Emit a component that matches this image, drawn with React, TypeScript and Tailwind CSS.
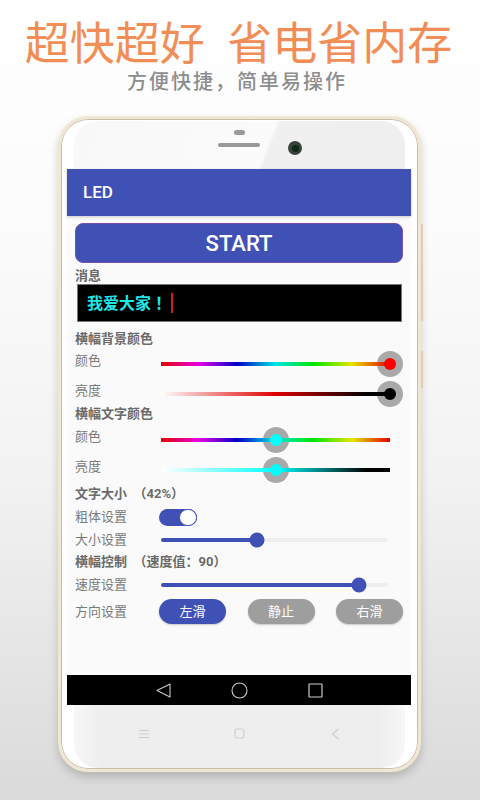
const hue = 'linear-gradient(to right,#e60000,#e600e6,#0000c8,#00e6e6,#00e600,#e6e600,#e60000)';

function Header({ text, className }: { text: string; className: string }) {
  return (
    <div className={`flex items-center whitespace-pre px-2 text-[13px] font-bold text-[#6a6a6a] ${className}`}>
      {text}
    </div>
  );
}

function ColorRow({ label, bg, pos, dot, className }: { label: string; bg: string; pos: number; dot: string; className: string }) {
  return (
    <div className={`flex items-center px-2 ${className}`}>
      <span className="mb-[7px] w-[86px] text-[13px] text-[#7a7a7a]">{label}</span>
      <div className="relative h-[4px] w-[229px]">
        {/* halo sits under the track, dot on top of it */}
        <div
          className="absolute top-1/2 h-[26px] w-[26px] -translate-x-1/2 -translate-y-1/2 rounded-full bg-[#a9a9a9]"
          style={{ left: `${pos}%` }}
        />
        <div className="relative h-full w-full" style={{ background: bg }} />
        <div
          className="absolute top-1/2 h-[12px] w-[12px] -translate-x-1/2 -translate-y-1/2 rounded-full"
          style={{ left: `${pos}%`, background: dot }}
        />
      </div>
    </div>
  );
}

function BlueSlider({ label, pos, className }: { label: string; pos: number; className: string }) {
  return (
    <div className={`flex items-center px-2 ${className}`}>
      <span className="w-[86px] text-[13px] text-[#7a7a7a]">{label}</span>
      <div className="relative h-[4px] w-[227px] rounded-full bg-[#eeeeee]">
        <div className="h-full rounded-full bg-[#3f51b5]" style={{ width: `${pos}%` }} />
        <div
          className="absolute top-1/2 h-[15px] w-[15px] -translate-x-1/2 -translate-y-1/2 rounded-full bg-[#3f51b5]"
          style={{ left: `${pos}%` }}
        />
      </div>
    </div>
  );
}

function DirButton({ text, active }: { text: string; active?: boolean }) {
  return (
    <div
      className={`flex h-[25px] w-[67px] items-center justify-center rounded-full text-[13px] text-white shadow-[0_1px_2px_rgba(0,0,0,0.2)] ${
        active ? 'bg-[#3f51b5]' : 'bg-[#9e9e9e]'
      }`}
    >
      {text}
    </div>
  );
}

export default function App() {
  return (
    <div className="flex h-[800px] w-[480px] flex-col overflow-hidden bg-[linear-gradient(to_bottom,#ffffff_0%,#fbfbfb_30%,#f2f2f2_60%,#dadada_100%)] font-['Roboto','Noto_Sans_CJK_SC',sans-serif]">
      {/* Headline */}
      <div className="mt-[22px] h-[46px] whitespace-pre pr-[3px] text-center text-[45px] leading-[46px] text-[#f28d56]">
        超快超好  省电省内存
      </div>
      <div className="h-[26px] pt-[1px] pr-[6px] text-center text-[20px] leading-[26px] font-medium tracking-[2px] text-[#8d8d8d]">
        方便快捷，简单易操作
      </div>

      {/* Phone */}
      <div className="relative mt-[22px] ml-[58px] flex h-[656px] w-[363px] flex-col rounded-[30px] border-[3px] border-[#f1e6d3] bg-white shadow-[inset_0_0_0_1px_#c9bda5,0_5px_10px_rgba(0,0,0,0.18)]">
        {/* side buttons */}
        <div className="absolute top-[105px] right-[-5px] h-[97px] w-[2px] bg-[#dccdb4]" />
        <div className="absolute top-[232px] right-[-5px] h-[37px] w-[2px] bg-[#dccdb4]" />

        <div className="mx-[13px] mt-[2px] flex h-[48px] justify-center rounded-t-[24px] bg-[linear-gradient(112deg,#f8f8f8_0%,#fbfbfb_58%,#f0f0f0_59%,#efefef_100%)]">
          <div className="ml-[41px] flex flex-col items-center pt-[9px]">
            <div className="h-[5px] w-[11px] rounded-full bg-[#999999]" />
            <div className="mt-[8px] h-[4px] w-[42px] rounded-full bg-[#9a9a9a]" />
          </div>
          <div className="mt-[20px] ml-[28px] flex h-[14px] w-[14px] items-center justify-center rounded-full bg-[#3a423c]">
            <div className="h-[7px] w-[7px] rounded-full bg-[#0f2a12]" />
          </div>
        </div>

        {/* Screen */}
        <div className="ml-[6px] mr-[7px] flex h-[536px] flex-col bg-[#fafafa]">
          <div className="flex h-[47px] items-center bg-[#3f51b5] pl-[16px] text-[17px] font-medium text-white shadow-[0_1px_3px_rgba(0,0,0,0.2)]">
            LED
          </div>

          <div className="mx-2 mt-[7px] flex h-[40px] items-center justify-center rounded-[8px] border border-[#7a4fa8] bg-[#3f51b5] text-[22px] font-medium text-white">
            START
          </div>

          <Header text="消息" className="h-[21px] pt-[5px]" />
          <div className="mx-[10px] flex h-[38px] w-[325px] items-center border border-[#777777] bg-black pl-[9px]">
            <span className="text-[16px] font-bold text-[#22e6e6]">
              我爱大家<span className="font-['Noto_Sans_CJK_TC',sans-serif]">！</span>
            </span>
            <div className="ml-[4px] h-[20px] w-[2px] bg-[#d01c1c]" />
          </div>

          <Header text="横幅背景颜色" className="mt-[8px] h-[19px] pb-[2px]" />
          <ColorRow label="颜色" bg={hue} pos={100} dot="#ff0000" className="h-[30px]" />
          <ColorRow
            label="亮度"
            bg="linear-gradient(to right,#ffffff,#e00000 50%,#000000 90%)"
            pos={100}
            dot="#000000"
            className="h-[30px]"
          />

          <Header text="横幅文字颜色" className="h-[10px]" />
          <ColorRow label="颜色" bg={hue} pos={50} dot="#00ffff" className="h-[42px]" />
          <ColorRow
            label="亮度"
            bg="linear-gradient(to right,#ffffff,#00ffff 50%,#000000 90%)"
            pos={50}
            dot="#00ffff"
            className="h-[18px]"
          />

          <Header text="文字大小  （42%）" className="mt-[6px] h-[18px]" />
          <div className="flex h-[28px] items-center px-2">
            <span className="w-[84px] text-[13px] text-[#7a7a7a]">粗体设置</span>
            <div className="flex h-[17px] w-[38px] justify-end rounded-full bg-[#3f51b5]">
              <div className="h-[17px] w-[18px] rounded-full border border-[#3f51b5] bg-white" />
            </div>
          </div>
          <BlueSlider label="大小设置" pos={42.3} className="h-[18px]" />
          <Header text="横幅控制  （速度值：90）" className="h-[26px]" />
          <BlueSlider label="速度设置" pos={87.2} className="h-[20px]" />

          <div className="mt-[4px] flex h-[25px] items-center px-2">
            <span className="w-[84px] text-[13px] text-[#7a7a7a]">方向设置</span>
            <div className="flex w-[244px] justify-between">
              <DirButton text="左滑" active />
              <DirButton text="静止" />
              <DirButton text="右滑" />
            </div>
          </div>

          <div className="flex-1" />

          {/* System nav bar */}
          <div className="flex h-[30px] items-center justify-center bg-black">
            <div className="flex w-[76px] justify-center">
              <svg width="15" height="15" viewBox="0 0 15 15" fill="none" stroke="#cccccc" strokeWidth="1.1">
                <path d="M1 7.5 L14 1 V14 Z" strokeLinejoin="round" />
              </svg>
            </div>
            <div className="flex w-[76px] justify-center">
              <svg width="17" height="17" viewBox="0 0 17 17" fill="none" stroke="#cccccc" strokeWidth="1.1">
                <circle cx="8.5" cy="8.5" r="7.5" />
              </svg>
            </div>
            <div className="flex w-[76px] justify-center">
              <svg width="15" height="15" viewBox="0 0 15 15" fill="none" stroke="#cccccc" strokeWidth="1.2">
                <rect x="1" y="1" width="13" height="13" rx="0.5" />
              </svg>
            </div>
          </div>
        </div>

        {/* Chin */}
        <div className="mx-[13px] flex h-[63px] items-center justify-center rounded-b-[24px] bg-[linear-gradient(to_right,#f7f7f7,#eeeeee_8%,#eeeeee_92%,#f7f7f7)] pb-[6px]">
          <div className="flex w-[96px] justify-center">
            <svg width="12" height="10" viewBox="0 0 12 10" fill="none" stroke="#cfcfcf" strokeWidth="1.2">
              <path d="M1 1.5 H11 M1 5 H11 M1 8.5 H11" />
            </svg>
          </div>
          <div className="flex w-[96px] justify-center">
            <svg width="11" height="11" viewBox="0 0 11 11" fill="none" stroke="#cfcfcf" strokeWidth="1.2">
              <rect x="1" y="1" width="9" height="9" rx="2" />
            </svg>
          </div>
          <div className="flex w-[96px] justify-center">
            <svg width="9" height="12" viewBox="0 0 9 12" fill="none" stroke="#cfcfcf" strokeWidth="1.4">
              <path d="M7.5 1 L1.5 6 L7.5 11" />
            </svg>
          </div>
        </div>
      </div>
    </div>
  );
}
